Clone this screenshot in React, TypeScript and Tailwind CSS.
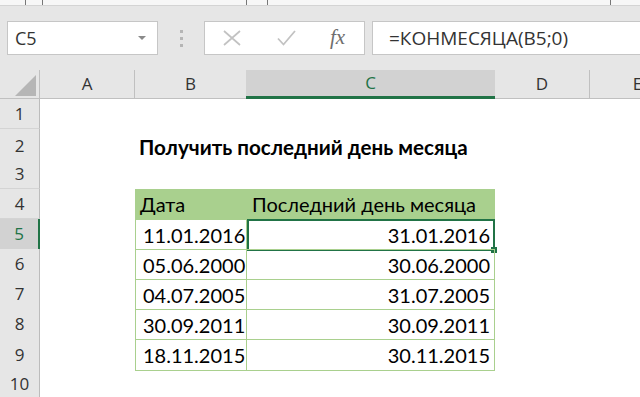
import React from "react";

type Row = {
  n: number;
  title?: boolean;
  head?: boolean;
  b?: string;
  c?: string;
  last?: boolean;
};

const rows: Row[] = [
  { n: 1 },
  { n: 2, title: true },
  { n: 3 },
  { n: 4, head: true },
  { n: 5, b: "11.01.2016", c: "31.01.2016" },
  { n: 6, b: "05.06.2000", c: "30.06.2000" },
  { n: 7, b: "04.07.2005", c: "31.07.2005" },
  { n: 8, b: "30.09.2011", c: "30.09.2011" },
  { n: 9, b: "18.11.2015", c: "30.11.2015", last: true },
  { n: 10 },
];

const ui = { fontFamily: '"Open Sans", "Noto Sans", sans-serif' };
const cell = { fontFamily: 'Lato, "Open Sans", sans-serif' };

function FormulaBar() {
  return (
    <div className="flex h-[64px] items-center bg-[#e6e6e6]" style={ui}>
      <div className="ml-[7px] flex h-[34px] w-[151px] shrink-0 items-center justify-between border border-[#c6c6c6] bg-white pl-[7px] pr-[11px]">
        <span className="text-[18px] text-[#333]">C5</span>
        <svg width="8" height="5" viewBox="0 0 8 5">
          <path d="M0 0 L8 0 L4 4 Z" fill="#8a8a8a" />
        </svg>
      </div>
      <div className="flex w-[46px] shrink-0 flex-col items-center gap-[4px]">
        <span className="h-[3px] w-[3px] bg-[#b5b5b5]" />
        <span className="h-[3px] w-[3px] bg-[#b5b5b5]" />
        <span className="h-[3px] w-[3px] bg-[#b5b5b5]" />
      </div>
      <div className="flex h-[34px] w-[161px] shrink-0 items-center border border-[#c6c6c6] bg-white">
        <svg className="ml-[18px]" width="18" height="16" viewBox="0 0 18 16">
          <path d="M1 1 L17 15 M17 1 L1 15" stroke="#c2c2c2" strokeWidth="1.7" fill="none" />
        </svg>
        <svg className="ml-[36px]" width="19" height="16" viewBox="0 0 19 16">
          <path d="M1 8.5 L6.5 14.5 L18 1" stroke="#c2c2c2" strokeWidth="1.8" fill="none" />
        </svg>
        <span
          className="ml-[34px] text-[21px] italic text-[#6e6e6e]"
          style={{ fontFamily: '"Liberation Serif", "DejaVu Serif", serif' }}
        >
          fx
        </span>
      </div>
      <div className="ml-[7px] flex h-[34px] w-[290px] shrink-0 items-center border border-[#c6c6c6] bg-white pl-[16px]">
        <span className="text-[19px] text-[#333]">=КОНМЕСЯЦА(B5;0)</span>
      </div>
    </div>
  );
}

const grid = "grid grid-cols-[40px_95px_111px_249px_95px_95px]";
const line = "border-[#a9d08e]";

function HeaderRow() {
  const base = "flex h-[29px] items-center justify-center border-b border-[#c0c0c0] text-[17px] text-[#333]";
  return (
    <div className={grid} style={ui}>
      <div className={`${base} relative border-r bg-[#e6e6e6]`}>
        <svg className="absolute left-[15px] top-[5px]" width="21" height="21" viewBox="0 0 21 21">
          <path d="M21 0 L21 21 L0 21 Z" fill="#b6b6b6" />
        </svg>
      </div>
      <div className={`${base} border-r bg-[#e6e6e6]`}>A</div>
      <div className={`${base} bg-[#e6e6e6]`}>B</div>
      <div className="flex h-[29px] items-center justify-center border-b-[3px] border-[#217346] bg-[#d2d2d2] text-[17px] text-[#217346]">
        C
      </div>
      <div className={`${base} border-r bg-[#e6e6e6]`}>D</div>
      <div className={`${base} bg-[#e6e6e6]`}>E</div>
    </div>
  );
}

function SheetRow({ r }: { r: Row }) {
  const selected = r.n === 5;
  const inTable = r.n >= 4 && r.n <= 9;
  const data = r.n >= 5 && r.n <= 9;
  const edges = `${inTable ? "border-l" : ""} ${data ? "border-t" : ""} ${r.last ? "border-b" : ""} ${line}`;
  return (
    <div className={`${grid} h-[30px]`}>
      <div
        className={`flex items-center justify-center border-b border-b-[#d4d4d4] text-[17px] ${
          selected
            ? "border-r-2 border-r-[#217346] bg-[#d2d2d2] text-[#217346]"
            : "border-r border-r-[#bcbcbc] bg-[#e6e6e6] text-[#333]"
        }`}
        style={ui}
      >
        {r.n}
      </div>
      <div />
      <div
        className={`flex items-center whitespace-nowrap pl-[4px] text-[20px] text-black ${edges} ${
          r.head ? "bg-[#a9d08e]" : ""
        }`}
        style={cell}
      >
        {r.title && <span className="pt-[3px] text-[20.6px] font-bold">Получить последний день месяца</span>}
        {r.head && "Дата"}
        {r.b && <span className="pl-[3px]">{r.b}</span>}
      </div>
      <div
        className={`relative flex items-center whitespace-nowrap px-[4px] text-[20px] text-black ${edges} ${
          inTable ? "border-r" : ""
        } ${r.head ? "bg-[#a9d08e] pl-[5px]" : "justify-end"}`}
        style={cell}
      >
        {r.head && "Последний день месяца"}
        {r.c}
        {selected && (
          <>
            <div className="absolute -top-px left-0 right-[-1px] bottom-[-1px] border-2 border-[#217346]" />
            <div className="absolute bottom-[-3px] right-[-3px] h-[6px] w-[6px] bg-[#217346]" />
          </>
        )}
      </div>
      <div />
      <div />
    </div>
  );
}

export default function App() {
  return (
    <div className="h-[397px] w-[640px] overflow-hidden bg-white">
      <div className="relative h-[6px] border-b border-[#d4d4d4] bg-[#f7f7f7]">
        <span className="absolute left-[25px] top-0 h-[5px] w-px bg-[#777]" />
        <span className="absolute left-[42px] top-0 h-[5px] w-px bg-[#777]" />
        <span className="absolute left-[246px] top-0 h-[5px] w-px bg-[#777]" />
        <span className="absolute left-[267px] top-0 h-[5px] w-px bg-[#777]" />
        <span className="absolute left-[610px] top-0 h-[5px] w-px bg-[#777]" />
      </div>
      <FormulaBar />
      <HeaderRow />
      {rows.map((r) => (
        <SheetRow key={r.n} r={r} />
      ))}
    </div>
  );
}
